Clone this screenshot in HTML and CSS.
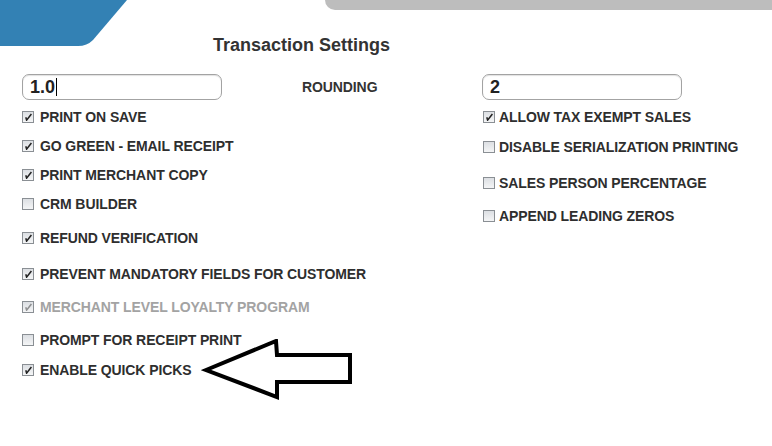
FILE: index.html
```html
<!DOCTYPE html>
<html>
<head>
<meta charset="utf-8">
<link rel="stylesheet" href="styles.css">
</head>
<body>
<div class="page">
  <svg class="deco-blue" width="130" height="47" viewBox="0 0 130 47"><path d="M0 0 H127 L93 40 Q87 46 78 46 H0 Z" fill="#3381b4"/></svg>
  <div class="deco-gray"></div>

  <h1 class="title">Transaction Settings</h1>

  <div class="settings">
    <div class="col col-left">
      <div class="field-row">
        <div class="field">1.0<span class="caret"></span></div>
        <span class="field-label">ROUNDING</span>
      </div>
      <ul class="opts">
        <li class="opt first"><span class="cb on"></span>PRINT ON SAVE</li>
        <li class="opt sp-13"><span class="cb on"></span>GO GREEN - EMAIL RECEIPT</li>
        <li class="opt sp-13"><span class="cb on"></span>PRINT MERCHANT COPY</li>
        <li class="opt sp-13"><span class="cb"></span>CRM BUILDER</li>
        <li class="opt sp-18"><span class="cb on"></span>REFUND VERIFICATION</li>
        <li class="opt sp-20"><span class="cb on"></span>PREVENT MANDATORY FIELDS FOR CUSTOMER</li>
        <li class="opt sp-17 disabled"><span class="cb on"></span>MERCHANT LEVEL LOYALTY PROGRAM</li>
        <li class="opt sp-17"><span class="cb"></span>PROMPT FOR RECEIPT PRINT</li>
        <li class="opt sp-14"><span class="cb on"></span>ENABLE QUICK PICKS</li>
      </ul>
    </div>
    <div class="col col-right">
      <div class="field-row">
        <div class="field">2</div>
      </div>
      <ul class="opts">
        <li class="opt first"><span class="cb on"></span>ALLOW TAX EXEMPT SALES</li>
        <li class="opt sp-14"><span class="cb"></span>DISABLE SERIALIZATION PRINTING</li>
        <li class="opt sp-20"><span class="cb"></span>SALES PERSON PERCENTAGE</li>
        <li class="opt sp-17"><span class="cb"></span>APPEND LEADING ZEROS</li>
      </ul>
    </div>
  </div>

  <svg class="arrow" width="160" height="66" viewBox="0 0 160 66">
    <path d="M5 31 L75 2 L76 16 L149 16 L149 43 L76 43 L76 58 Z" fill="#fff" stroke="#000" stroke-width="4" stroke-linejoin="miter"/>
  </svg>
</div>
</body>
</html>
```
FILE: styles.css
```css
* { box-sizing: border-box; }
html, body { margin: 0; padding: 0; background: #fff; }
body { font-family: "Liberation Sans", Arial, sans-serif; color: #2e2e2e; }
.page { position: relative; width: 772px; height: 446px; overflow: hidden; }

.deco-blue { position: absolute; left: 0; top: 0; display: block; }
.deco-gray { position: absolute; left: 325px; top: 0; right: 0; height: 10px; background: #bdbdbd; border-bottom-left-radius: 10px; }

.title { margin: 0; padding: 35px 0 0 213px; font-size: 18px; font-weight: bold; line-height: 20px; color: #333; }

.settings { display: grid; grid-template-columns: 460px 1fr; padding: 19px 0 0 22px; }

.field-row { display: flex; align-items: center; height: 26px; }
.field { width: 200px; height: 26px; border: 1px solid #a3a3a3; border-radius: 7px; box-shadow: inset 0 1px 1px rgba(0,0,0,0.12); padding: 2px 0 0 7px; font-size: 18px; font-weight: bold; line-height: 21px; color: #222; }
.caret { display: inline-block; width: 1px; height: 18px; background: #000; vertical-align: -3px; margin-left: 1px; }
.field-label { margin-left: 80px; font-size: 14px; font-weight: bold; color: #333; letter-spacing: -0.1px; }

.opts { list-style: none; margin: 0; padding: 0; }
.opt { display: flex; align-items: center; height: 16px; font-size: 14px; letter-spacing: -0.1px; font-weight: bold; line-height: 16px; color: #2e2e2e; white-space: nowrap; }
.opt.first { margin-top: 9px; }
.opt.disabled { color: #a3a3a3; }
.sp-13 { margin-top: 13px; }
.sp-14 { margin-top: 14px; }
.sp-17 { margin-top: 17px; }
.sp-18 { margin-top: 18px; }
.sp-20 { margin-top: 20px; }

.cb { flex: none; width: 12px; height: 12px; margin-right: 6px; border: 1px solid #8a8f94; background: linear-gradient(#dcdfe3, #f4f5f6); position: relative; }
.col-right .cb { margin-left: 1px; margin-right: 4px; }
.cb.on::after { content: ""; position: absolute; left: 2px; top: 1px; width: 7px; height: 8px;
  background: no-repeat center/contain url("data:image/svg+xml;utf8,<svg xmlns='http://www.w3.org/2000/svg' viewBox='0 0 7 8'><path d='M0.8 4.2 L1.6 7.2 L6.4 1' fill='none' stroke='%23222' stroke-width='1.5'/></svg>"); }
.opt.disabled .cb.on::after { opacity: 0.45; }

.arrow { position: absolute; left: 201px; top: 339px; display: block; }
```
